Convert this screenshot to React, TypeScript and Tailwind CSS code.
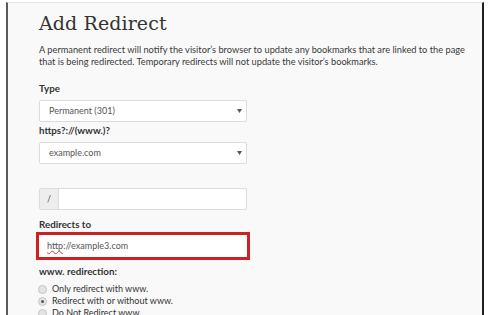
import React from "react";

const sans = { fontFamily: "Lato, 'Open Sans', sans-serif" };

function Radio({ checked, label }: { checked?: boolean; label: string }) {
  return (
    <div className="flex items-center h-[12px] gap-[5px]">
      <span className="w-[9px] h-[9px] rounded-full border border-[#c4c4c4] bg-[#e4e4e4] flex items-center justify-center">
        {checked && <span className="w-[3px] h-[3px] rounded-full bg-[#555]" />}
      </span>
      <span className="text-[9px] text-[#333]">{label}</span>
    </div>
  );
}

function Caret() {
  return (
    <svg width="5" height="4" viewBox="0 0 5 4" className="mr-[4px]">
      <path d="M0 0 L5 0 L2.5 4 Z" fill="#555" />
    </svg>
  );
}

export default function App() {
  return (
    <div className="w-[490px] h-[315px] bg-white overflow-hidden relative" style={sans}>
      <div className="ml-[6px] mt-[2px] w-[478px] h-[320px] bg-[#f9f9f9] border-l-2 border-l-[#5a5a5a] border-r-2 border-r-[#1e1e1e] border-t border-t-[#e4e4e4] pl-[31px] pt-[8px]">
        <h1
          className="text-[19px] leading-[24px] text-[#333] tracking-[0.1px]"
          style={{ fontFamily: "'DejaVu Serif', serif" }}
        >
          Add Redirect
        </h1>
        <p className="mt-[9px] text-[9.25px] leading-[12px] text-[#3a3a3a] w-[432px]">
          A permanent redirect will notify the visitor’s browser to update any bookmarks that are linked to the page
          that is being redirected. Temporary redirects will not update the visitor’s bookmarks.
        </p>
        <div className="mt-[14px] text-[9.75px] font-bold text-[#333] leading-[12px]">Type</div>
        <div className="mt-[6px] w-[208px] h-[22px] bg-white border border-[#dcdcdc] rounded-[2px] flex items-center justify-between pl-[9px]">
          <span className="text-[9px] text-[#555]">Permanent (301)</span>
          <Caret />
        </div>
        <div className="mt-[2px] text-[9.75px] font-bold text-[#333] leading-[12px]">https?://(www.)?</div>
        <div className="mt-[6px] w-[208px] h-[22px] bg-white border border-[#dcdcdc] rounded-[2px] flex items-center justify-between pl-[9px]">
          <span className="text-[9px] text-[#555]">example.com</span>
          <Caret />
        </div>
        <div className="mt-[24px] w-[208px] h-[22px] bg-white border border-[#dcdcdc] rounded-[2px] flex">
          <div className="w-[19px] h-full bg-[#eeeeee] border-r border-[#dcdcdc] flex items-center justify-center text-[9px] text-[#555]">
            /
          </div>
        </div>
        <div className="mt-[8px] text-[9.75px] font-bold text-[#333] leading-[12px]">Redirects to</div>
        <div className="mt-[2px] -ml-[3px] w-[214px] h-[28px] border-[3px] border-[#cc2222] bg-white flex items-center pl-[8px]">
          <span className="text-[9px] text-[#555]">
            <span className="underline decoration-wavy decoration-[#e33] decoration-[1px]">http</span>://example3.com
          </span>
        </div>
        <div className="mt-[5px] text-[9.75px] font-bold text-[#333] leading-[12px]">www. redirection:</div>
        <div className="mt-[6px] flex flex-col ml-[-1px]">
          <Radio label="Only redirect with www." />
          <Radio checked label="Redirect with or without www." />
          <Radio label="Do Not Redirect www." />
        </div>
      </div>
    </div>
  );
}
